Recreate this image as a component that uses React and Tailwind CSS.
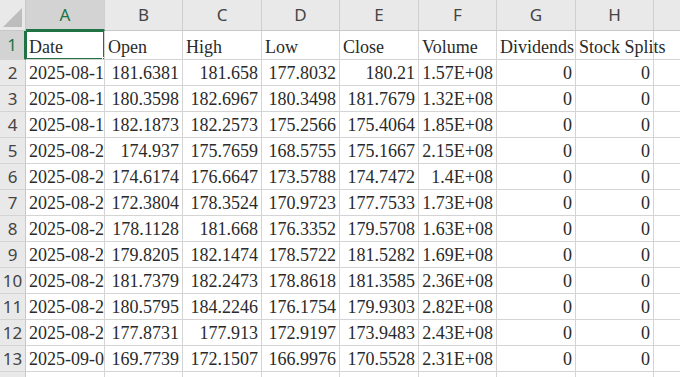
const cols = ["A", "B", "C", "D", "E", "F", "G", "H"];
const widths = ["w-[79px]", "w-[78px]", "w-[79px]", "w-[78px]", "w-[79px]", "w-[78px]", "w-[79px]", "w-[78px]"];

const rows = [
  ["2025-08-15", "181.6381", "181.658", "177.8032", "180.21", "1.57E+08"],
  ["2025-08-18", "180.3598", "182.6967", "180.3498", "181.7679", "1.32E+08"],
  ["2025-08-19", "182.1873", "182.2573", "175.2566", "175.4064", "1.85E+08"],
  ["2025-08-20", "174.937", "175.7659", "168.5755", "175.1667", "2.15E+08"],
  ["2025-08-21", "174.6174", "176.6647", "173.5788", "174.7472", "1.4E+08"],
  ["2025-08-22", "172.3804", "178.3524", "170.9723", "177.7533", "1.73E+08"],
  ["2025-08-25", "178.1128", "181.668", "176.3352", "179.5708", "1.63E+08"],
  ["2025-08-26", "179.8205", "182.1474", "178.5722", "181.5282", "1.69E+08"],
  ["2025-08-27", "181.7379", "182.2473", "178.8618", "181.3585", "2.36E+08"],
  ["2025-08-28", "180.5795", "184.2246", "176.1754", "179.9303", "2.82E+08"],
  ["2025-08-29", "177.8731", "177.913", "172.9197", "173.9483", "2.43E+08"],
  ["2025-09-02", "169.7739", "172.1507", "166.9976", "170.5528", "2.31E+08"],
];

const head = ["Date", "Open", "High", "Low", "Close", "Volume", "Dividends", "Stock Splits"];

const sans = "font-['Noto_Sans','Liberation_Sans',sans-serif]";
const serif = "font-['Liberation_Serif','Noto_Sans_CJK_TC',serif]";

function ColumnHeader() {
  return (
    <div className={`flex h-[31px] bg-[#e9e9e9] ${sans} text-[17px]`}>
      <div className="relative w-[26px] shrink-0 border-r border-b border-[#c8c8c8]">
        <svg className="absolute right-[3px] bottom-[3px]" width="19" height="19" viewBox="0 0 19 19">
          <polygon points="19,0 19,19 0,19" fill="#bdbdbd" />
        </svg>
      </div>
      {cols.map((c, i) => (
        <div
          key={c}
          className={`${widths[i]} shrink-0 flex items-center justify-center border-r border-[#cfcfcf] ${
            i === 0
              ? "bg-[#d3d3d3] text-[#217346] border-b-2 border-b-[#217346]"
              : "text-[#444] border-b border-b-[#c8c8c8]"
          }`}
        >
          {c}
        </div>
      ))}
      <div className="flex-1 border-b border-[#c8c8c8]" />
    </div>
  );
}

function Row({ n, cells, first }) {
  const h = first ? "h-[29px]" : "h-[26px]";
  return (
    <div className={`flex ${h}`}>
      <div
        className={`w-[26px] shrink-0 flex items-center justify-center ${sans} text-[17px] border-b border-[#d4d4d4] ${
          first
            ? "bg-[#d3d3d3] text-[#217346] border-r-2 border-r-[#217346]"
            : "bg-[#e9e9e9] text-[#444] border-r border-r-[#c8c8c8]"
        }`}
      >
        {n}
      </div>
      {cells.map((v, i) => {
        const right = !first && i > 0;
        return (
          <div
            key={i}
            className={`${widths[i]} shrink-0 relative flex items-end pb-[1px] border-r border-b border-[#d4d4d4] ${serif} text-[18px] leading-[22px] text-[#2a2a2a] whitespace-nowrap ${
              right ? "justify-end pr-[3px]" : "justify-start pl-[3px]"
            } ${i === 7 && first ? "overflow-visible z-10" : "overflow-hidden"}`}
          >
            {v}
            {first && i === 0 && (
              <>
                <div className="absolute -left-px -top-px -right-px -bottom-px border-2 border-[#217346]" />
                <div className="absolute -right-[4px] -bottom-[4px] h-[6px] w-[6px] bg-[#217346] border border-white" />
              </>
            )}
          </div>
        );
      })}
      <div className="flex-1 border-b border-[#d4d4d4]" />
    </div>
  );
}

export default function App() {
  return (
    <div className="w-[680px] h-[377px] overflow-hidden bg-white">
      <ColumnHeader />
      <Row n={1} cells={head} first />
      {rows.map((r, i) => (
        <Row key={i} n={i + 2} cells={[...r, "0", "0"]} />
      ))}
      <Row n={14} cells={["", "", "", "", "", "", "", ""]} />
    </div>
  );
}
